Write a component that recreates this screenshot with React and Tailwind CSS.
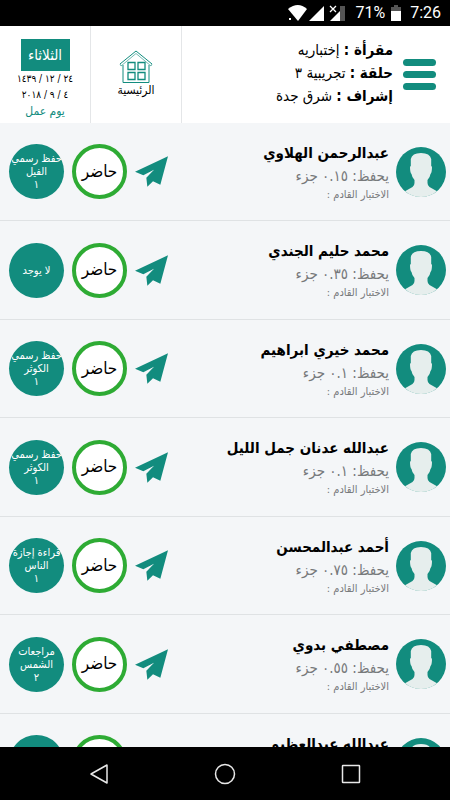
import React from "react";

const students = [
  { name: "عبدالرحمن الهلاوي", parts: "٠.١٥", plan: ["حفظ رسمي", "الفيل", "١"] },
  { name: "محمد حليم الجندي", parts: "٠.٣٥", plan: ["لا يوجد"] },
  { name: "محمد خيري ابراهيم", parts: "٠.١", plan: ["حفظ رسمي", "الكوثر", "١"] },
  { name: "عبدالله عدنان جمل الليل", parts: "٠.١", plan: ["حفظ رسمي", "الكوثر", "١"] },
  { name: "أحمد عبدالمحسن", parts: "٠.٧٥", plan: ["قراءة إجازة", "الناس", "١"] },
  { name: "مصطفي بدوي", parts: "٠.٥٥", plan: ["مراجعات", "الشمس", "٢"] },
  { name: "عبدالله عبدالعظيم", parts: "", plan: [] },
];

const info = [
  ["مقرأة", "إختباريه"],
  ["حلقة", "تجريبية ٣"],
  ["إشراف", "شرق جدة"],
];

function StatusBar() {
  return (
    <div dir="ltr" className="flex h-[26px] shrink-0 items-center justify-end bg-black pr-[9px] text-white">
      <svg viewBox="0 0 60 20" className="mr-2 h-5 w-[60px]" aria-hidden="true">
        <path d="M1 6Q11 -2 20 6L11 18Z" fill="#fff" />
        <rect x="2" y="15" width="2" height="2" fill="#fff" />
        <path d="M22 18L37 3V18Z" fill="#fff" />
        <path d="M43 18L58 3V18Z" fill="#fff" />
        <path d="M53 3h5v15h-5z" fill="#555" />
        <path d="M43 3l6 6M49 3l-6 6" stroke="#fff" strokeWidth="1.3" />
      </svg>
      <span className="font-['Roboto',sans-serif] text-base leading-5">71%</span>
      <svg viewBox="0 0 10 16" className="mr-[9px] ml-1.5 h-4 w-[10px]" aria-hidden="true">
        <path d="M3 0h4v2h3v14H0V2h3z" fill="#555" />
        <path d="M0 6h10v10H0z" fill="#fff" />
      </svg>
      <span className="font-['Roboto',sans-serif] text-base leading-5">7:26</span>
    </div>
  );
}

function Header() {
  return (
    <header className="flex h-[97px] shrink-0 bg-white">
      <div className="flex flex-1 items-start gap-[10px] pt-[13px] pr-[14px]">
        <button type="button" aria-label="القائمة" className="mt-5 flex w-[33px] flex-col gap-[5px]">
          <span className="h-[7px] rounded-full bg-[#128c7e]" />
          <span className="h-[7px] rounded-full bg-[#128c7e]" />
          <span className="h-[7px] rounded-full bg-[#128c7e]" />
        </button>
        <div className="text-[15px] leading-[23px] text-black">
          {info.map(([label, value]) => (
            <p key={label} className="whitespace-nowrap">
              <b>{label} :</b> {value}
            </p>
          ))}
        </div>
      </div>
      <a href="#home" className="flex w-[92px] flex-col items-center border-x border-[#e4e6e8] pt-6 text-xs leading-3 text-black">
        <svg viewBox="0 0 34 34" className="h-[34px] w-[34px]" fill="none" stroke="#128c7e" aria-hidden="true">
          <path d="M1 14L17 1L33 14" />
          <path d="M1 14L2 16L17 3.500L32 16L33 14" strokeWidth="0.600" />
          <path d="M4 15V32.500H30V15" />
          <path d="M9 12.500h7v7H9zM19 12.500h7v7h-7zM9 22.500h7v7H9zM19 22.500h7v7h-7z" strokeWidth="1.300" />
        </svg>
        الرئيسية
      </a>
      <div className="flex w-[90px] flex-col items-center pt-[13px] text-[10px] leading-4 text-black">
        <span className="flex h-8 w-[49px] items-center justify-center bg-[#128c7e] text-[15px] text-white">الثلاثاء</span>
        <span className="whitespace-nowrap">٢٤ / ١٢ / ١٤٣٩</span>
        <span className="whitespace-nowrap">٤ / ٩ / ٢٠١٨</span>
        <span className="text-xs leading-4 text-[#128c7e]">يوم عمل</span>
      </div>
    </header>
  );
}

function Avatar() {
  return (
    <svg viewBox="0 0 50 50" className="h-[50px] w-[50px] shrink-0" aria-hidden="true">
      <circle cx="25" cy="25" r="25" fill="#128c7e" />
      <path
        d="M9 44.200L16.500 40Q18.500 38.500 18.500 36V33Q16 30.500 15.500 27Q14.200 26 14 20.500Q14 19 14.800 19V12Q16 6 25 6Q34 6 35.200 12V19Q36 19 36 20.500Q35.800 26 34.500 27Q34 30.500 31.500 33V36Q31.500 38.500 33.500 40L41 44.200A25 25 0 0 1 9 44.200Z"
        fill="#e6eeed"
      />
    </svg>
  );
}

function StudentRow({ name, parts, plan }) {
  return (
    <li className="flex shrink-0 items-center border-b border-[#dfe2e4] pr-1 pl-[9px] odd:h-[98px] even:h-[99px]">
      <Avatar />
      <div className="mr-[7px] min-w-0 flex-1 whitespace-nowrap">
        <h2 className="text-[15px] leading-6 font-bold text-black">{name}</h2>
        <p className="text-[15px] leading-[22px] text-[#77797b]">يحفظ: {parts} جزء</p>
        <p className="text-[11px] leading-4 text-[#77797b]">الاختبار القادم :</p>
      </div>
      <button type="button" aria-label="إرسال" className="shrink-0">
        <svg viewBox="0 0 99 91" className="h-[31px] w-[33px]" fill="#128c7e" aria-hidden="true">
          <path d="M99 0L0 46L25 57L57 40L34 64L37 91L54 75L76 85Z" />
        </svg>
      </button>
      <button
        type="button"
        className="mr-2 flex h-[55px] w-[55px] shrink-0 items-center justify-center rounded-full border-4 border-[#2eab34] bg-white text-[17px] text-black"
      >
        حاضر
      </button>
      <button
        type="button"
        className="mr-2 flex h-[55px] w-[55px] shrink-0 flex-col items-center justify-center rounded-full bg-[#128c7e] text-[11px] leading-[13px] whitespace-nowrap text-white"
      >
        {plan.map((line) => (
          <span key={line}>{line}</span>
        ))}
      </button>
    </li>
  );
}

function NavBar() {
  return (
    <nav dir="ltr" className="flex h-[53px] shrink-0 items-center justify-around bg-black px-9">
      <button type="button" aria-label="رجوع">
        <svg viewBox="0 0 20 22" className="h-[22px] w-5" fill="none" stroke="#e8e8e8" strokeWidth="1.500" strokeLinejoin="round" aria-hidden="true">
          <path d="M18 2V20L2 11Z" />
        </svg>
      </button>
      <button type="button" aria-label="الشاشة الرئيسية">
        <svg viewBox="0 0 22 22" className="h-[22px] w-[22px]" fill="none" stroke="#e8e8e8" strokeWidth="1.500" aria-hidden="true">
          <circle cx="11" cy="11" r="9.500" />
        </svg>
      </button>
      <button type="button" aria-label="التطبيقات">
        <svg viewBox="0 0 20 20" className="h-5 w-5" fill="none" stroke="#e8e8e8" strokeWidth="1.500" aria-hidden="true">
          <rect x="1.500" y="1.500" width="17" height="17" rx="0.500" />
        </svg>
      </button>
    </nav>
  );
}

export default function App() {
  return (
    <div
      dir="rtl"
      className="flex h-screen flex-col overflow-hidden bg-[#f4f6f8] font-['DejaVu_Sans_Condensed','DejaVu_Sans',sans-serif]"
    >
      <StatusBar />
      <Header />
      <ul className="flex min-h-0 flex-1 flex-col overflow-hidden">
        {students.map((student) => (
          <StudentRow key={student.name} {...student} />
        ))}
      </ul>
      <NavBar />
    </div>
  );
}
